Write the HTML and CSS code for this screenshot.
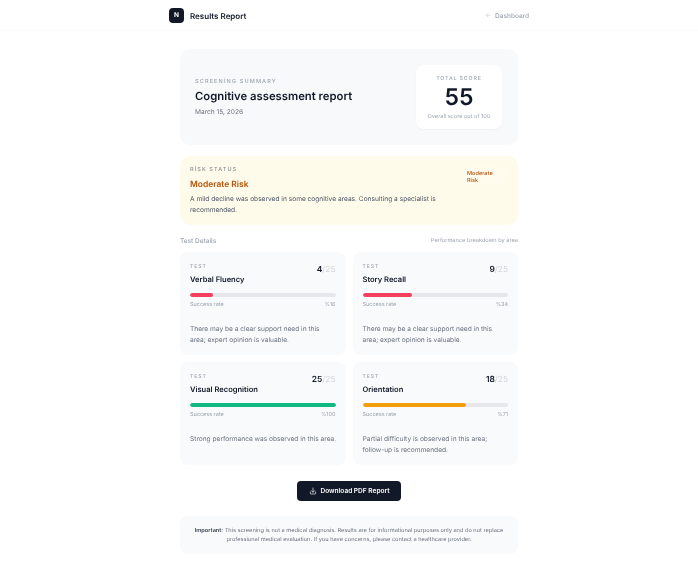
FILE: index.html
```html
<!DOCTYPE html>
<html lang="en">
<head>
<meta charset="utf-8">
<title>Results Report</title>
<link rel="stylesheet" href="styles.css">
</head>
<body>
<header class="topbar">
  <div class="brand"><span class="logo">N</span><span class="brand-name">Results Report</span></div>
  <a class="back" href="#">
    <svg class="back-icon" viewBox="0 0 24 24" fill="none" stroke="currentColor" stroke-width="2" stroke-linecap="round" stroke-linejoin="round"><path d="M19 12H5"/><path d="M12 19l-7-7 7-7"/></svg>
    Dashboard
  </a>
</header>
<main class="page">
  <section class="hero">
    <div class="hero-text">
      <div class="eyebrow">SCREENİNG SUMMARY</div>
      <h1 class="hero-title">Cognitive assessment report</h1>
      <div class="hero-date">March 15, 2026</div>
    </div>
    <div class="score-card">
      <div class="score-label">TOTAL SCORE</div>
      <div class="score-value">55</div>
      <div class="score-note">Overall score out of 100</div>
    </div>
  </section>

  <section class="risk">
    <div class="risk-body">
      <div class="risk-label">RİSK STATUS</div>
      <div class="risk-title">Moderate Risk</div>
      <p class="risk-text">A mild decline was observed in some cognitive areas. Consulting a specialist is recommended.</p>
    </div>
    <div class="risk-badge">Moderate Risk</div>
  </section>

  <div class="section-head">
    <span class="section-title">Test Details</span>
    <span class="section-sub">Performance breakdown by area</span>
  </div>

  <section class="grid">
    <article class="card">
      <div class="card-top">
        <div><div class="card-tag">TEST</div><h2 class="card-title">Verbal Fluency</h2></div>
        <div class="card-score"><b>4</b><span>/25</span></div>
      </div>
      <div class="track"><div class="fill red" style="width:16%"></div></div>
      <div class="rate"><span>Success rate</span><span>%16</span></div>
      <p class="card-text">There may be a clear support need in this area; expert opinion is valuable.</p>
    </article>
    <article class="card">
      <div class="card-top">
        <div><div class="card-tag">TEST</div><h2 class="card-title">Story Recall</h2></div>
        <div class="card-score"><b>9</b><span>/25</span></div>
      </div>
      <div class="track"><div class="fill red" style="width:34%"></div></div>
      <div class="rate"><span>Success rate</span><span>%34</span></div>
      <p class="card-text">There may be a clear support need in this area; expert opinion is valuable.</p>
    </article>
    <article class="card">
      <div class="card-top">
        <div><div class="card-tag">TEST</div><h2 class="card-title">Visual Recognition</h2></div>
        <div class="card-score"><b>25</b><span>/25</span></div>
      </div>
      <div class="track"><div class="fill green" style="width:100%"></div></div>
      <div class="rate"><span>Success rate</span><span>%100</span></div>
      <p class="card-text single-line">Strong performance was observed in this area.</p>
    </article>
    <article class="card">
      <div class="card-top">
        <div><div class="card-tag">TEST</div><h2 class="card-title">Orientation</h2></div>
        <div class="card-score"><b>18</b><span>/25</span></div>
      </div>
      <div class="track"><div class="fill amber" style="width:71%"></div></div>
      <div class="rate"><span>Success rate</span><span>%71</span></div>
      <p class="card-text">Partial difficulty is observed in this area; follow-up is recommended.</p>
    </article>
  </section>

  <div class="actions">
    <button class="download" type="button">
      <svg class="download-icon" viewBox="0 0 24 24" fill="none" stroke="currentColor" stroke-width="2" stroke-linecap="round" stroke-linejoin="round"><path d="M12 3v12"/><path d="M7 11l5 5 5-5"/><path d="M4 15v4a2 2 0 0 0 2 2h12a2 2 0 0 0 2-2v-4"/></svg>
      Download PDF Report
    </button>
  </div>

  <footer class="notice"><strong>Important:</strong> This screening is not a medical diagnosis. Results are for informational purposes only and do not replace professional medical evaluation. If you have concerns, please contact a healthcare provider.</footer>
</main>
</body>
</html>
```
FILE: styles.css
```css
* { box-sizing: border-box; }
html, body { margin: 0; padding: 0; }
body {
  background: #fff;
  color: #111827;
  font-family: Inter, "Liberation Sans", sans-serif;
  text-rendering: geometricPrecision;
  height: 573px;
  overflow: hidden;
}
.topbar, .page { filter: blur(0.3px); }
.topbar {
  height: 31px;
  padding: 0 169px;
  display: flex;
  align-items: center;
  justify-content: space-between;
  border-bottom: 1px solid #f9fafb;
}
.brand { display: flex; align-items: center; gap: 6px; }
.logo {
  width: 15px;
  height: 15px;
  border-radius: 4px;
  background: #111827;
  color: #fff;
  font-size: 6.5px;
  font-weight: 700;
  display: flex;
  align-items: center;
  justify-content: center;
}
.brand-name { padding-top: 1px; font-size: 8px; font-weight: 600; }
.back {
  display: flex;
  align-items: center;
  gap: 4px;
  padding-top: 1px;
  color: #9ca3af;
  font-size: 6.5px;
  font-weight: 500;
  text-decoration: none;
}
.back-icon { width: 6.5px; height: 6.5px; color: #c4c8cf; }
.page { width: 338px; margin: 18px 0 0 180px; }
.hero {
  height: 96px;
  padding: 16px 16px 16px 15px;
  background: #f8f9fb;
  border-radius: 10px;
  display: flex;
  align-items: center;
  justify-content: space-between;
}
.eyebrow {
  font-size: 5.6px;
  font-weight: 500;
  letter-spacing: 1.1px;
  color: #9ca3af;
}
.hero-title {
  margin: 3px 0 4px;
  font-size: 11.3px;
  line-height: 16px;
  font-weight: 600;
  color: #111827;
}
.hero-date { font-size: 6.6px; color: #6b7280; }
.score-card {
  width: 86px;
  height: 64px;
  background: #fff;
  border-radius: 8px;
  box-shadow: 0 1px 2px rgba(17, 24, 39, 0.04);
  display: flex;
  flex-direction: column;
  align-items: center;
  padding-top: 11px;
}
.score-label { font-size: 5.3px; font-weight: 500; letter-spacing: 0.85px; color: #9ca3af; }
.score-value { margin-top: 3px; font-size: 23px; line-height: 24px; font-weight: 600; color: #111827; }
.score-note { margin-top: 4.5px; font-size: 5.6px; color: #9ca3af; }
.risk {
  height: 69px;
  margin-top: 11px;
  padding: 11px 10px 0;
  background: #fffbeb;
  border-radius: 10px;
  display: flex;
  justify-content: space-between;
  align-items: flex-start;
}
.risk-body { width: 262px; }
.risk-label { font-size: 5.5px; font-weight: 500; letter-spacing: 1.1px; line-height: 7px; color: #8b8f96; }
.risk-title { margin-top: 5px; font-size: 8.45px; line-height: 12px; font-weight: 600; color: #b45309; }
.risk-text { margin: 2.5px 0 0; font-size: 6.6px; line-height: 11.4px; color: #4b5563; }
.risk-badge {
  width: 44px;
  margin: -1px 1px 0 0;
  padding: 5px 4px;
  height: 19px;
  border-radius: 10px;
  background: #fffcee;
  font-size: 5.6px;
  line-height: 7.4px;
  font-weight: 500;
  color: #b45309;
}
.section-head {
  margin-top: 11px;
  height: 9px;
  display: flex;
  align-items: center;
  justify-content: space-between;
}
.section-title { font-size: 6.5px; font-weight: 500; color: #9ca3af; }
.section-sub { font-size: 5.65px; color: #9ca3af; }
.grid {
  margin-top: 7px;
  display: grid;
  grid-template-columns: minmax(0, 1fr) minmax(0, 1fr);
  gap: 7px;
}
.card {
  height: 103px;
  padding: 12px 10px 0;
  background: #f9fafb;
  border-radius: 8px;
}
.card-top { display: flex; justify-content: space-between; align-items: flex-start; height: 23px; }
.card-tag { font-size: 5px; line-height: 6px; font-weight: 500; letter-spacing: 1px; color: #9ca3af; }
.card-title { margin: 4px 0 0; font-size: 7.55px; line-height: 11px; font-weight: 600; color: #111827; }
.card-score { font-size: 8.4px; line-height: 12px; }
.card-score b { font-weight: 600; color: #111827; }
.card-score span { font-weight: 400; color: #d1d5db; }
.track { margin-top: 6px; height: 4px; border-radius: 2px; background: #e5e7eb; overflow: hidden; }
.fill { height: 100%; border-radius: 2px; }
.red { background: #f43f5e; }
.green { background: #10b981; }
.amber { background: #f59e0b; }
.rate {
  margin-top: 5px;
  display: flex;
  justify-content: space-between;
  font-size: 5.5px;
  line-height: 7px;
  color: #9ca3af;
}
.card-text { margin: 15px 0 0; font-size: 6.6px; line-height: 11.4px; color: #6b7280; }
.single-line { white-space: nowrap; }
.actions { margin-top: 16px; display: flex; justify-content: center; }
.download {
  width: 104px;
  height: 20px;
  border: 0;
  border-radius: 4px;
  background: #111827;
  color: #fff;
  font-family: inherit;
  font-size: 6.55px;
  font-weight: 600;
  display: flex;
  align-items: center;
  justify-content: center;
  gap: 4px;
  padding: 0;
}
.download-icon { width: 8px; height: 8px; }
.notice {
  margin-top: 15px;
  height: 38px;
  padding: 11px 14px 0;
  background: #f9fafb;
  border-radius: 8px;
  font-size: 5.65px;
  line-height: 9.1px;
  text-align: center;
  color: #6b7280;
}
.notice strong { font-weight: 600; color: #374151; }
```
